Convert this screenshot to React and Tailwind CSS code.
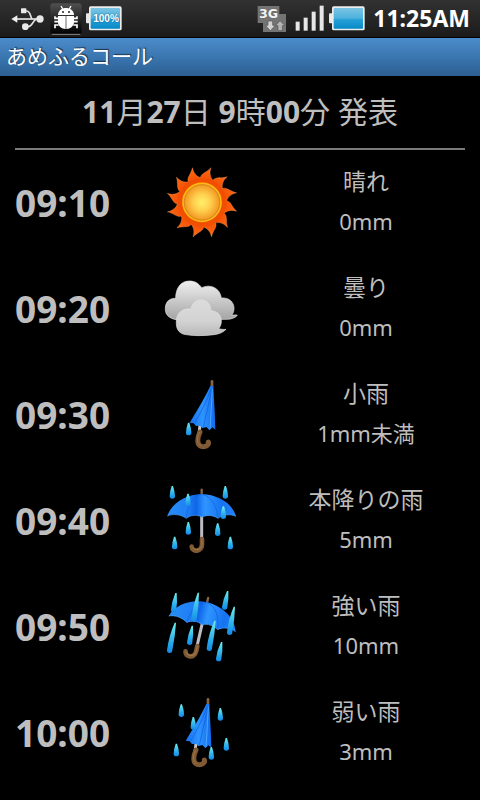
import React from 'react';

const FORECAST = [
  { time: '09:10', icon: 'sun', label: '晴れ', amount: '0mm' },
  { time: '09:20', icon: 'cloud', label: '曇り', amount: '0mm' },
  { time: '09:30', icon: 'drizzle', label: '小雨', amount: '1mm未満' },
  { time: '09:40', icon: 'rain', label: '本降りの雨', amount: '5mm' },
  { time: '09:50', icon: 'storm', label: '強い雨', amount: '10mm' },
  { time: '10:00', icon: 'light', label: '弱い雨', amount: '3mm' },
];

const RAYS = [0, 30, 60, 90, 120, 150, 180, 210, 240, 270, 300, 330];

const UsbIcon = () => (
  <svg viewBox="0 0 102 72" className="h-6 w-[34px]" aria-hidden="true">
    <g fill="none" stroke="#e4e4e4" strokeWidth="5">
      <path d="M18 36H84" />
      <path d="M41 12H50C62 13 60 28 66 36" />
      <path d="M46 59H54C70 58 66 40 80 36" />
    </g>
    <path d="M4 36L22 25V47Z" fill="#f0f0f0" />
    <circle cx="90" cy="36" r="11" fill="#e8e8e8" />
    <circle cx="46" cy="59" r="10" fill="#e8e8e8" />
    <rect x="33" y="4" width="16" height="15" rx="2" fill="#e8e8e8" />
  </svg>
);

const DebugIcon = () => (
  <svg viewBox="0 0 96 96" className="size-8" aria-hidden="true">
    <defs>
      <linearGradient id="debugTile" x1="0" y1="0" x2="0" y2="1">
        <stop offset="0" stopColor="#505050" />
        <stop offset="0.5" stopColor="#262626" />
        <stop offset="1" stopColor="#000" />
      </linearGradient>
    </defs>
    <rect x="1" y="1" width="94" height="93" rx="8" fill="url(#debugTile)" />
    <path d="M5 94H91" stroke="#8a8a8a" strokeWidth="3" />
    <g stroke="#fff" strokeWidth="4" fill="none">
      <path d="M33 9L39 19M63 9L57 19" />
      <path d="M26 46H15V40M26 56H13M26 66H15V76M70 46H81V40M70 56H83M70 66H81V76" strokeWidth="5" />
    </g>
    <path d="M24 36C25 8 71 8 72 36Z" fill="#fff" />
    <circle cx="39" cy="27" r="3" fill="#222" />
    <circle cx="57" cy="27" r="3" fill="#222" />
    <path d="M24 39H47V78C31 77 24 67 24 58ZM49 39H72V58C72 67 65 77 49 78Z" fill="#fff" />
  </svg>
);

const BatteryIcon = ({ gradientId }) => (
  <svg viewBox="0 0 108 75" className="h-[25px] w-9" aria-hidden="true">
    <defs>
      <linearGradient id={gradientId} x1="0" y1="0" x2="0" y2="1">
        <stop offset="0" stopColor="#7cc4e4" />
        <stop offset="0.5" stopColor="#4cb1dc" />
        <stop offset="0.55" stopColor="#28a2d8" />
        <stop offset="1" stopColor="#0789c6" />
      </linearGradient>
    </defs>
    <rect x="0" y="22" width="12" height="30" rx="3" fill="#e8e8e8" />
    <rect x="9" y="1" width="98" height="72" rx="5" fill="#ededed" />
    <rect x="14" y="6" width="88" height="62" rx="2" fill={`url(#${gradientId})`} />
  </svg>
);

const NetworkIcon = () => (
  <svg viewBox="0 0 90 84" className="h-7 w-[30px]" aria-hidden="true">
    <path d="M2 3H67V27H87V81H18V54H2Z" fill="#747474" />
    <path d="M33 48H47V61H55L40 77L25 61H33Z" fill="#d2d2d2" stroke="#555" strokeWidth="2" />
    <path d="M63 77V62H55L69 47L84 62H76V77Z" fill="#b4b4b4" stroke="#555" strokeWidth="2" />
    <text x="6" y="38" fill="#f4f4f4" stroke="#555" strokeWidth="2" paintOrder="stroke" className="font-['DejaVu_Sans',sans-serif] text-[38px] font-bold">
      3G
    </text>
  </svg>
);

const SignalIcon = () => (
  <svg viewBox="0 0 90 81" className="h-[27px] w-[30px]" aria-hidden="true">
    <g fill="#e6e6e6">
      <rect x="2" y="50" width="12" height="27" />
      <rect x="26" y="38" width="12" height="39" />
      <rect x="50" y="20" width="12" height="57" />
      <rect x="74" y="2" width="12" height="75" />
    </g>
  </svg>
);

const Gradients = () => (
  <svg className="absolute size-0" aria-hidden="true">
    <defs>
      <radialGradient id="sunDisc">
        <stop offset="0" stopColor="#fff06a" />
        <stop offset="0.45" stopColor="#ffcf4e" />
        <stop offset="1" stopColor="#f08f1c" />
      </radialGradient>
      <radialGradient id="sunFlare" gradientUnits="userSpaceOnUse" cx="0" cy="0" r="108">
        <stop offset="0.55" stopColor="#f24a00" />
        <stop offset="1" stopColor="#ff6a14" />
      </radialGradient>
      <linearGradient id="cloudBack" x1="0" y1="0" x2="0" y2="1">
        <stop offset="0" stopColor="#f0f0f0" />
        <stop offset="1" stopColor="#a4a4a4" />
      </linearGradient>
      <linearGradient id="cloudFront" x1="0" y1="0" x2="0" y2="1">
        <stop offset="0" stopColor="#dcdcdc" />
        <stop offset="0.6" stopColor="#d2d2d2" />
        <stop offset="1" stopColor="#b8b8b8" />
      </linearGradient>
      <linearGradient id="drop" x1="0" y1="0" x2="0" y2="1">
        <stop offset="0" stopColor="#6ff0ec" />
        <stop offset="0.55" stopColor="#31b5ec" />
        <stop offset="1" stopColor="#1288e8" />
      </linearGradient>
      <linearGradient id="canopy" x1="0" y1="0" x2="1" y2="0">
        <stop offset="0" stopColor="#2a8cf7" />
        <stop offset="0.3" stopColor="#1f7ff5" />
        <stop offset="0.42" stopColor="#0f66e8" />
        <stop offset="0.55" stopColor="#2f95ff" />
        <stop offset="0.8" stopColor="#1672f0" />
        <stop offset="1" stopColor="#2684f8" />
      </linearGradient>
      <linearGradient id="folded" x1="0" y1="0" x2="1" y2="0">
        <stop offset="0" stopColor="#1670ee" />
        <stop offset="0.5" stopColor="#2e94ff" />
        <stop offset="1" stopColor="#126cee" />
      </linearGradient>
    </defs>
  </svg>
);

// teardrop with its tip at (x, y); lean shifts the bulb left for slanted rain
const Drop = ({ x, y, h = 38, r = 8, lean = 0 }) => (
  <path
    d={`M${x - 2} ${y}H${x + 2}Q${x - lean * 0.5 + r} ${y + h * 0.45} ${x - lean + r} ${y + h - r}A${r} ${r} 0 0 1 ${x - lean - r} ${y + h - r}Q${x - lean * 0.7 - r} ${y + h * 0.45} ${x - 2} ${y}Z`}
    fill="url(#drop)"
  />
);

const Sun = () => (
  <g transform="translate(138 127)">
    {RAYS.map((angle) => (
      <path
        key={angle}
        d="M-5 -73C-3 -88 12 -88 27 -104C22 -90 24 -76 33 -66L0 0Z"
        transform={`rotate(${angle})`}
        fill="url(#sunFlare)"
        stroke="#ffa45e"
        strokeWidth="1"
      />
    ))}
    <circle r="73" fill="#f24e00" />
    <circle r="57" fill="url(#sunDisc)" stroke="#ffba12" strokeWidth="5" />
    <circle r="53" fill="none" stroke="#c9821a" strokeWidth="2" />
  </g>
);

const Cloud = () => (
  <g strokeWidth="2">
    <path
      d="M60 164C34 158 27 146 28 128C29 110 42 99 59 100C59 72 72 48 100 48C118 48 128 56 137 68C162 56 192 68 196 99C220 97 234 112 234 130C234 140 231 146 227 150H244C240 158 228 162 214 163Z"
      fill="url(#cloudBack)"
      stroke="#e2e2e2"
    />
    <path
      d="M84 208C66 202 60 190 61 168C62 144 80 129 105 132C108 114 120 105 136 105C153 105 164 118 165 137C184 138 196 150 196 168C196 178 193 185 188 191C196 193 203 194 210 193C202 202 190 207 174 209C140 213 110 213 84 208Z"
      fill="url(#cloudFront)"
      stroke="#e2e2e2"
    />
  </g>
);

const FoldedUmbrella = () => (
  <g>
    <path d="M132 166L129 190" stroke="#c9c9c9" strokeWidth="9" />
    <path d="M132 186C124 202 121 225 136 229C149 233 160 224 157 216" fill="none" stroke="#805a34" strokeWidth="15" strokeLinecap="round" />
    <path d="M131 186C122 202 121 220 134 227" fill="none" stroke="#9c7446" strokeWidth="3" />
    <path d="M168 51V34" stroke="#8b6540" strokeWidth="8" strokeLinecap="round" />
    <path
      d="M163 48H172C174 90 177 130 178 179L169 172L160 181L151 171L140 174L131 167L120 168L113 160L101 158C116 134 142 92 163 48Z"
      fill="url(#folded)"
    />
    <path d="M166 55C152 95 132 130 116 160M168 55C160 95 150 135 142 171" fill="none" stroke="#0f5cd8" strokeWidth="2" />
    <path d="M169 55C168 95 164 135 162 177" fill="none" stroke="#4aa7ff" strokeWidth="3" />
  </g>
);

const OpenUmbrella = () => (
  <g>
    <path d="M137 58V44" stroke="#8b6540" strokeWidth="7" strokeLinecap="round" />
    <path d="M137 120V192" stroke="#bcbcc4" strokeWidth="9" />
    <path d="M138 192V208C138 231 109 233 107 215" fill="none" stroke="#805a34" strokeWidth="14" strokeLinecap="round" />
    <path d="M138 190V208C138 226 116 228 110 217" fill="none" stroke="#a37a4a" strokeWidth="3" />
    <path
      d="M34 123C48 82 90 59 137 57C184 59 228 82 240 124C222 116 201 118 186 130C170 120 154 119 137 126C121 118 104 120 91 130C76 119 53 115 34 123Z"
      fill="url(#canopy)"
    />
    <path d="M137 57C108 65 94 92 91 130M137 57C168 66 182 92 186 130" fill="none" stroke="#0f5fdc" strokeWidth="2" />
    <path d="M34 123C53 115 76 119 91 130C104 120 121 118 137 126C154 119 170 120 186 130C201 118 222 116 240 124" fill="none" stroke="#48a2ff" strokeWidth="2" />
  </g>
);

const ARTWORK = {
  sun: { viewBox: '3 -6 270 270', art: <Sun /> },
  cloud: { viewBox: '3 -3 270 270', art: <Cloud /> },
  drizzle: {
    viewBox: '3 0 270 270',
    art: (
      <>
        <FoldedUmbrella />
        <Drop x={98} y={158} />
      </>
    ),
  },
  rain: {
    viewBox: '3 3 270 270',
    art: (
      <>
        <OpenUmbrella />
        <Drop x={49} y={33} />
        <Drop x={96} y={56} />
        <Drop x={208} y={33} />
        <Drop x={202} y={94} />
        <Drop x={97} y={141} />
        <Drop x={185} y={145} />
        <Drop x={56} y={185} />
        <Drop x={223} y={185} />
      </>
    ),
  },
  storm: {
    viewBox: '3 6 270 270',
    art: (
      <>
        <g transform="translate(0 8) rotate(13 138 130)">
          <OpenUmbrella />
        </g>
        <Drop x={60} y={39} h={58} lean={7} />
        <Drop x={127} y={38} h={88} lean={13} />
        <Drop x={215} y={33} h={56} lean={9} />
        <Drop x={235} y={80} h={85} lean={14} />
        <Drop x={58} y={128} h={91} lean={17} />
        <Drop x={109} y={137} h={58} lean={8} />
        <Drop x={177} y={122} h={91} lean={17} />
        <Drop x={197} y={186} h={58} lean={9} />
      </>
    ),
  },
  light: {
    viewBox: '3 9 270 270',
    art: (
      <>
        <g transform="translate(-12 9)">
          <FoldedUmbrella />
        </g>
        <Drop x={76} y={58} />
        <Drop x={112} y={96} />
        <Drop x={193} y={69} />
        <Drop x={61} y={176} />
        <Drop x={211} y={159} />
        <Drop x={166} y={186} />
      </>
    ),
  },
};

const WeatherIcon = ({ name, label }) => (
  <svg viewBox={ARTWORK[name].viewBox} className="mx-auto size-[90px]" role="img" aria-label={label}>
    {ARTWORK[name].art}
  </svg>
);

const StatusBar = () => (
  <header className="flex h-[38px] items-center justify-between border-b border-black bg-linear-to-b from-[#323232] to-[#1b1b1b] pr-[10px] pl-[10px]">
    <div className="flex items-center gap-1">
      <UsbIcon />
      <span className="pl-[2px]">
        <DebugIcon />
      </span>
      <div className="grid place-items-center">
        <div className="col-start-1 row-start-1">
          <BatteryIcon gradientId="levelBattery" />
        </div>
        <span className="col-start-1 row-start-1 pl-1 font-['Liberation_Sans',sans-serif] text-[10px] leading-none font-bold text-white [text-shadow:0_0_2px_#045a8c]">
          100%
        </span>
      </div>
    </div>
    <div className="flex items-center gap-2">
      <NetworkIcon />
      <div className="flex items-center gap-1">
        <SignalIcon />
        <BatteryIcon gradientId="statusBattery" />
      </div>
      <time className="text-[23px] leading-none font-bold text-white">11:25AM</time>
    </div>
  </header>
);

const App = () => (
  <div lang="ja" className="min-h-screen bg-black font-['Noto_Sans','Noto_Sans_CJK_JP',sans-serif] text-[#bebebe]">
    <Gradients />
    <StatusBar />
    <h1 className="h-[38px] bg-linear-to-b from-[#4c8ccb] via-[#3a76b0] to-[#2c5f92] px-[6px] text-[21px] leading-9 text-white [text-shadow:1px_-1px_1px_#1a3450]">
      あめふるコール
    </h1>

    <main className="px-[15px]">
      <h2 className="border-b-2 border-[#7b7b7b] text-center text-[30px] leading-[72px] font-normal">
        <b>11</b>月<b>27</b>日 <b>9</b>時<b>00</b>分 発表
      </h2>

      <table className="w-full table-fixed">
        <colgroup>
          <col className="w-[27%]" />
          <col className="w-[29%]" />
          <col className="w-[44%]" />
        </colgroup>
        <tbody>
          {FORECAST.map((row) => (
            <tr key={row.time} className="h-[106px]">
              <th scope="row" className="p-0 text-left text-[37px] font-bold">
                {row.time}
              </th>
              <td className="p-0">
                <WeatherIcon name={row.icon} label={row.label} />
              </td>
              <td className="p-0 pb-1 text-center leading-10">
                <p className="text-[23px]">{row.label}</p>
                <p className="text-[22px]">{row.amount}</p>
              </td>
            </tr>
          ))}
        </tbody>
      </table>
    </main>
  </div>
);

export default App;
